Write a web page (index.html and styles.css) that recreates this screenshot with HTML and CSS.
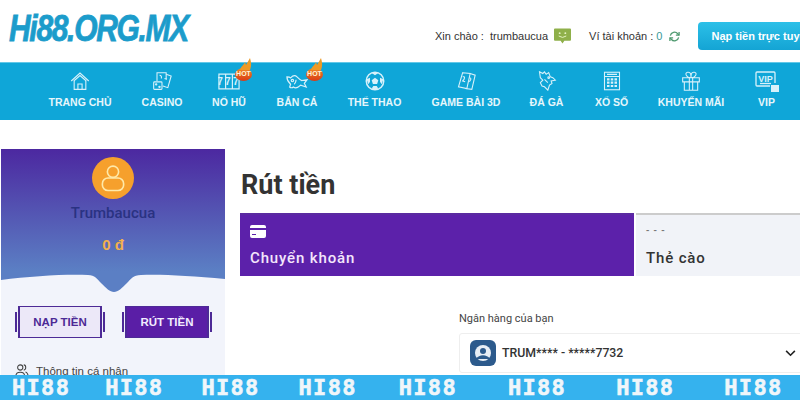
FILE: index.html
```html
<!DOCTYPE html>
<html lang="vi">
<head>
    <meta charset="UTF-8">
    <meta name="viewport" content="width=device-width, initial-scale=1.0">
    <title>Rút tiền</title>
    <link rel="stylesheet" href="styles.css">
</head>
<body>

<header class="top-bar">
    <div class="logo-box"><span class="logo">Hi88.ORG.MX</span></div>
    <div class="greeting">Xin chào : <span class="greeting-name">trumbaucua</span></div>
    <svg class="chat-icon" viewBox="0 0 18 16"><path d="M1 0h16a1 1 0 0 1 1 1v11a1 1 0 0 1-1 1h-6l-2 3-2-3H1a1 1 0 0 1-1-1V1a1 1 0 0 1 1-1z" fill="#8fb04a"/><circle cx="6" cy="5" r="1" fill="#e8f5c8"/><circle cx="12" cy="5" r="1" fill="#e8f5c8"/><path d="M5 8q4 3 8 0" stroke="#e8f5c8" fill="none"/></svg>
    <div class="wallet">Ví tài khoản : <span class="wallet-value">0</span></div>
    <svg class="refresh-icon" viewBox="0 0 12 12" fill="none" stroke="#4f9a70" stroke-width="1.4"><path d="M1.5 5A4.5 4.5 0 0 1 9.500 3L11 4.500M10.500 7A4.500 4.500 0 0 1 2.500 9L1 7.500"/><path d="M11 1v3.500H7.500M1 11V7.500h3.500"/></svg>
    <button class="topup-button">Nạp tiền trực tuyến</button>
</header>

<nav class="main-nav">
    <a class="nav-item nav-home">
        <svg class="nav-icon" viewBox="0 0 24 24"><path d="M1.500 12 12 2.500 22.500 12M4.500 12 12 5.500l7.500 6.500"/><path d="M5 12v10h14V12M9.500 22v-6.500h5V22"/></svg>
        <span>TRANG CHỦ</span>
    </a>
    <a class="nav-item nav-casino">
        <svg class="nav-icon" viewBox="0 0 24 24"><path d="M6 12V2h11v8"/><path d="M17 4l6 2-4 14-6-2"/><rect x="2" y="13" width="10" height="9" rx="1"/><circle cx="5" cy="16" r=".8"/><circle cx="9" cy="19" r=".8"/><path d="M9 5c2 0 3 2 2 4M15 9l3 1"/></svg>
        <span>CASINO</span>
    </a>
    <a class="nav-item nav-slot">
        <svg class="nav-icon nav-icon-wide" viewBox="0 0 24 18"><path d="M1 1h22v16H1zM8.300 1v16M15.700 1v16"/><text class="slot-digits" x="12" y="13" text-anchor="middle">777</text></svg>
        <span>NỔ HŨ</span>
        <b class="hot-badge"><svg class="hot-flame" viewBox="0 0 14 12"><path d="M1 12C2 8 5 7 6 4l1 3 4-7c1 4 2 7 0 12z" fill="#ee9a26"/></svg><i class="hot-text">HOT</i></b>
    </a>
    <a class="nav-item nav-fish">
        <svg class="nav-icon nav-icon-wide" viewBox="0 0 24 18"><path d="M1 4c2 0 3 0 4 1 2-2 5-3 7-1 1 1 3 3 5 4l6-1-3 4 2 4-6-2c-2 2-5 4-8 2-1 1-3 1-4 0l1-3C3 10 1 8 1 4z"/><circle cx="7" cy="8" r="1.300"/><path d="M9 12c1-1 2-3 2-5"/></svg>
        <span>BẮN CÁ</span>
        <b class="hot-badge"><svg class="hot-flame" viewBox="0 0 14 12"><path d="M1 12C2 8 5 7 6 4l1 3 4-7c1 4 2 7 0 12z" fill="#ee9a26"/></svg><i class="hot-text">HOT</i></b>
    </a>
    <a class="nav-item nav-sport">
        <svg class="nav-icon" viewBox="0 0 24 24"><circle cx="12" cy="12" r="10.500" stroke-width="1.800"/><path class="icon-solid" d="m12 8 4 3-1.500 4.500h-5L8 11z"/><path class="icon-solid" d="M8 2.500h8L12 5zM2 10l4-2 0 5-2 3zM22 10l-4-2 0 5 2 3zM8 21l2-3h4l2 3-4 1.500z"/></svg>
        <span>THỂ THAO</span>
    </a>
    <a class="nav-item nav-cards">
        <svg class="nav-icon" viewBox="0 0 24 24"><path d="M8 2l9 1-4 18-10-2z"/><path d="M17 3l6 2-4 17-8-1"/><path d="M8 7c3-1 3 2 0 5l3 1M16 8c3 0 2 4-1 5"/></svg>
        <span>GAME BÀI 3D</span>
    </a>
    <a class="nav-item nav-cock">
        <svg class="nav-icon" viewBox="0 0 24 24"><path d="M3 1l4 2 2-2 2 3 3-2 2 5 3 1 3 3-5 1 1 3-3 2-2 6-4-4-3-1-2-4 3-3-3-3z"/><circle cx="14" cy="8" r="1"/><path d="M9 10l4 4"/></svg>
        <span>ĐÁ GÀ</span>
    </a>
    <a class="nav-item nav-lotto">
        <svg class="nav-icon" viewBox="0 0 24 24"><rect x="3" y="1.500" width="18" height="21"/><path d="M3 6.500h18M6 4h12"/><path class="lotto-dots" d="M6 10h3M10.500 10h3M15 10h3M6 14h3M10.500 14h3M15 14h3M6 18h3M10.500 18h3M15 18h3"/></svg>
        <span>XỔ SỐ</span>
    </a>
    <a class="nav-item nav-promo">
        <svg class="nav-icon" viewBox="0 0 24 24"><path d="M2 8h20v5H2zM4 13h16v10H4zM10 8v15M14 8v15M12 8C6 8 4 2 8 1.500s4 3 4 6.500c0-3.500 0-7 4-6.500s2 6.500-4 6.500z"/></svg>
        <span>KHUYẾN MÃI</span>
    </a>
    <a class="nav-item nav-vip">
        <svg class="nav-icon nav-icon-vip" viewBox="0 0 24 21"><path d="M15 15H2a1 1 0 0 1-1-1V2a1 1 0 0 1 1-1h17a1 1 0 0 1 1 1v10"/><text class="vip-text" x="10.500" y="10.500" text-anchor="middle">VIP</text><path d="M5 12.500h11"/><path class="icon-solid" d="M16 14h8v7h-8z"/></svg>
        <span>VIP</span>
    </a>
</nav>

<main class="page-body">
    <aside class="sidebar">
        <div class="profile-card">
            <div class="avatar">
                <svg viewBox="0 0 24 24" fill="none" stroke="#ffe9a8" stroke-width="1.300"><circle cx="12" cy="7" r="4.500"/><rect x="3.500" y="12" width="17" height="10" rx="4.500"/></svg>
            </div>
            <div class="profile-name">Trumbaucua</div>
            <div class="profile-balance">0 đ</div>
        </div>
        <svg class="profile-notch" viewBox="0 0 224 24" preserveAspectRatio="none"><path d="M0 0h224v8C190 5 160 3 140 4c-8 0-10 4-14 8-5 5-9 9-13 9-4 0-8-4-13-9-4-4-6-8-13-8C65 3 30 5 0 9z" fill="#5b7fc4"/></svg>
        <div class="side-buttons">
            <button class="side-button side-button-light">NẠP TIỀN</button>
            <button class="side-button side-button-dark">RÚT TIỀN</button>
        </div>
        <div class="side-link">
            <svg class="side-link-icon" viewBox="0 0 16 16" fill="none" stroke="#444" stroke-width="1.200"><circle cx="6" cy="4" r="3"/><path d="M1 14c0-6 10-6 10 0M10 1c3 0 3 6 0 6M12 9c2 1 3 3 3 5"/></svg>
            <span>Thông tin cá nhân</span>
        </div>
    </aside>

    <section class="content">
        <h1 class="page-title">Rút tiền</h1>
        <div class="tabs">
            <div class="tab tab-active">
                <svg class="tab-icon" viewBox="0 0 16 13"><path d="M2 0h12a2 2 0 0 1 2 2v1H0V2a2 2 0 0 1 2-2zM0 5h16v6a2 2 0 0 1-2 2H2a2 2 0 0 1-2-2zm2 4v1h4V9z" fill="#fff" fill-rule="evenodd"/></svg>
                <span>Chuyển khoản</span>
            </div>
            <div class="tab">
                <span class="tab-dashes">- - -</span>
                <span>Thẻ cào</span>
            </div>
        </div>
        <div class="bank-form">
            <label class="bank-label">Ngân hàng của bạn</label>
            <div class="bank-select">
                <svg class="bank-logo" viewBox="0 0 26 26"><rect width="26" height="26" rx="6" fill="#2c5a8c"/><circle cx="13" cy="13" r="8" fill="#e8eef5"/><circle cx="13" cy="11" r="3" fill="#2c5a8c"/><path d="M6 19c3-5 11-5 14 0z" fill="#2c5a8c"/></svg>
                <span class="bank-name">TRUM**** - *****7732</span>
                <svg class="chevron" viewBox="0 0 12 8" fill="none" stroke="#222" stroke-width="1.800"><path d="m1 1 5 5 5-5"/></svg>
            </div>
        </div>
    </section>
</main>

<div class="watermark">
    <span>HI88</span><span>HI88</span><span>HI88</span><span>HI88</span><span>HI88</span><span>HI88</span><span>HI88</span><span>HI88</span>
</div>

</body>
</html>
```

FILE: styles.css
```css
html, body {
    margin: 0;
    height: 400px;
    overflow: hidden;
}

body {
    position: relative;
    background-color: white;
    font-family: "Liberation Sans", Arial, sans-serif;
    color: #333;
}

.top-bar {
    display: flex;
    align-items: center;
    height: 62px;
    white-space: nowrap;
    overflow: hidden;
}

.top-bar > * {
    flex-shrink: 0;
}

.logo-box {
    width: 425px;
    padding: 0 0 4px 9px;
    box-sizing: border-box;
}

.logo {
    display: inline-block;
    font-family: "Liberation Sans", sans-serif;
    font-size: 37px;
    font-weight: bold;
    font-style: italic;
    letter-spacing: -1.600px;
    color: #1c9ccb;
    -webkit-text-stroke: 0.8px #1c9ccb;
    transform: scaleX(0.81);
    transform-origin: left center;
}

.greeting,
.wallet {
    padding-top: 10px;
    font-size: 11px;
    color: #333;
}

.greeting {
    margin-left: 10px;
}

.greeting-name {
    margin-left: 3px;
}

.chat-icon {
    width: 17px;
    height: 16px;
    margin: 10px 0 0 6px;
}

.wallet {
    margin-left: 18px;
}

.wallet-value {
    color: #3a9a9a;
}

.refresh-icon {
    width: 11px;
    height: 11px;
    margin: 10px 0 0 7px;
}

.topup-button {
    width: 130px;
    height: 28px;
    margin: 10px 0 0 18px;
    padding: 0 0 0 13px;
    border: none;
    border-radius: 4px 0 0 4px;
    background: linear-gradient(#2cc0e8, #14a4d4);
    color: white;
    font-family: inherit;
    font-size: 11px;
    font-weight: bold;
    text-align: left;
    white-space: nowrap;
    overflow: hidden;
}

.main-nav {
    display: flex;
    height: 58px;
    background-color: #0fa6d8;
    box-shadow: inset 0 1px 0 #62c8e8;
    color: #e6f6fb;
    font-size: 10.500px;
    font-weight: bold;
}

.nav-item {
    position: relative;
    display: flex;
    flex-direction: column;
    align-items: center;
    padding-top: 9px;
    box-sizing: border-box;
    white-space: nowrap;
}

.nav-item span {
    position: absolute;
    top: 34px;
    line-height: 13px;
}

.nav-icon {
    width: 20px;
    height: 20px;
    fill: none;
    stroke: #d8f1fa;
    stroke-width: 1.300;
}

.nav-icon-wide {
    width: 22px;
    height: 17px;
    margin-top: 2px;
}

.nav-icon-vip {
    width: 24px;
    height: 21px;
}

.icon-solid {
    fill: #d8f1fa;
    stroke: none;
}

.lotto-dots {
    stroke-width: 2.600;
}

.slot-digits,
.vip-text {
    fill: #d8f1fa;
    stroke: none;
    font-size: 9px;
    font-weight: bold;
}

.slot-digits {
    font-size: 11px;
    letter-spacing: 2.500px;
}

.nav-home { margin-left: 49px; width: 62px; }
.nav-casino { margin-left: 30px; width: 42px; }
.nav-slot { margin-left: 29px; width: 34px; }
.nav-fish { margin-left: 31px; width: 40px; }
.nav-sport { margin-left: 31px; width: 53px; }
.nav-cards { margin-left: 31px; width: 68px; }
.nav-cock { margin-left: 30px; width: 33px; }
.nav-lotto { margin-left: 32px; width: 33px; }
.nav-promo { margin-left: 30px; width: 66px; }
.nav-vip { margin-left: 34px; width: 17px; }

.hot-badge {
    position: absolute;
    top: 6px;
    left: 23px;
    width: 17px;
    height: 13px;
    border-radius: 50%;
    background: linear-gradient(#f08a24, #d93a15);
    font-size: 7px;
    line-height: 12px;
    text-align: center;
}

.nav-fish .hot-badge {
    left: 29px;
}

.hot-flame {
    position: absolute;
    top: -10px;
    left: 4px;
    width: 14px;
    height: 12px;
}

.hot-text {
    position: relative;
    font-style: normal;
    color: #fff3d8;
}

.page-body {
    display: flex;
    padding-top: 29px;
}

.sidebar {
    flex-shrink: 0;
    width: 224px;
    margin-left: 1px;
    background-color: #f2f4fb;
}

.profile-card {
    display: flex;
    flex-direction: column;
    align-items: center;
    height: 122px;
    padding-top: 8px;
    box-sizing: border-box;
    background: linear-gradient(#4c28a0, #5b7fc4);
}

.avatar {
    display: flex;
    justify-content: center;
    align-items: center;
    width: 42px;
    height: 42px;
    border-radius: 50%;
    background-color: #f6a02c;
}

.avatar svg {
    width: 30px;
    height: 30px;
}

.profile-name {
    margin-top: 5px;
    font-family: Roboto, sans-serif;
    font-size: 15px;
    font-weight: 500;
    color: #2a3282;
}

.profile-balance {
    margin-top: 14px;
    font-size: 15px;
    font-weight: bold;
    color: #f2b04c;
}

.profile-notch {
    display: block;
    width: 224px;
    height: 24px;
}

.side-buttons {
    display: flex;
    gap: 23px;
    margin-top: 11px;
    padding-left: 17px;
}

.side-button {
    position: relative;
    width: 84px;
    height: 32px;
    padding: 0;
    border: 1px solid #4d2a96;
    border-width: 1px 2px;
    font-family: inherit;
    font-size: 11.500px;
    font-weight: bold;
}

.side-button::before,
.side-button::after {
    content: "";
    position: absolute;
    top: 5px;
    width: 2px;
    height: 20px;
    background-color: #4d2a96;
}

.side-button::before {
    left: -5px;
}

.side-button::after {
    right: -5px;
}

.side-button-light {
    background-color: #ece8f8;
    color: #4d2a96;
}

.side-button-dark {
    background-color: #5a1ea6;
    color: #f2ecff;
}

.side-link {
    display: flex;
    align-items: center;
    gap: 7px;
    margin-top: 26px;
    padding-left: 14px;
    font-size: 11.500px;
    color: #444;
}

.side-link-icon {
    width: 14px;
    height: 14px;
}

.content {
    flex-grow: 1;
    min-width: 0;
    padding: 22px 0 0 15px;
}

.page-title {
    margin: 0 0 0 1px;
    font-family: Roboto, sans-serif;
    font-size: 27px;
    font-weight: 700;
    line-height: 28px;
    color: #333;
}

.tabs {
    display: flex;
    margin-top: 14px;
    height: 63px;
}

.tab {
    display: flex;
    flex-direction: column;
    justify-content: flex-end;
    box-sizing: border-box;
    padding: 0 0 9px 10px;
    flex-grow: 1;
    border-top: 2px solid #ccc;
    background-color: #f1f3f8;
    font-family: Roboto, sans-serif;
    font-size: 15px;
    font-weight: 500;
    letter-spacing: 0.850px;
    color: #333;
}

.tab-active {
    flex-grow: 0;
    width: 394px;
    margin-right: 2px;
    border-top-color: #5a2aa0;
    background-color: #5c21aa;
    color: #f4e6fb;
}

.tab-icon {
    width: 16px;
    height: 13px;
    margin-bottom: 11px;
}

.tab-dashes {
    margin-bottom: 12px;
    font-size: 10px;
    line-height: 12px;
    color: #777;
}

.bank-form {
    padding: 36px 0 0 219px;
}

.bank-label {
    display: block;
    font-family: Roboto, sans-serif;
    font-size: 11px;
    color: #444;
}

.bank-select {
    display: flex;
    align-items: center;
    height: 38px;
    margin: 8px -4px 0 0;
    padding-left: 10px;
    border: 1px solid #eee;
    border-radius: 3px;
}

.bank-logo {
    width: 26px;
    height: 26px;
}

.bank-name {
    margin-left: 6px;
    font-family: Roboto, sans-serif;
    font-size: 12.300px;
    font-weight: 500;
    color: #333;
}

.chevron {
    width: 11px;
    height: 7px;
    margin-left: auto;
    margin-right: 7px;
}

.watermark {
    position: absolute;
    left: 0;
    right: 0;
    bottom: 0;
    display: flex;
    height: 25px;
    background-color: #35b2ee;
    color: #f0f6fa;
    font-family: "DejaVu Sans Mono", monospace;
    font-size: 22px;
    font-weight: bold;
    line-height: 25px;
    letter-spacing: 1.300px;
    white-space: nowrap;
    -webkit-text-stroke: 0.6px #f0f6fa;
}

.watermark span {
    flex-shrink: 0;
    margin-left: 50px;
}

.watermark span:nth-child(1) { margin-left: 12px; }
.watermark span:nth-child(2) { margin-left: 35px; }
.watermark span:nth-child(3) { margin-left: 38px; }
.watermark span:nth-child(4) { margin-left: 39px; }
.watermark span:nth-child(5) { margin-left: 42px; }
.watermark span:nth-child(6) { margin-left: 51px; }
```
